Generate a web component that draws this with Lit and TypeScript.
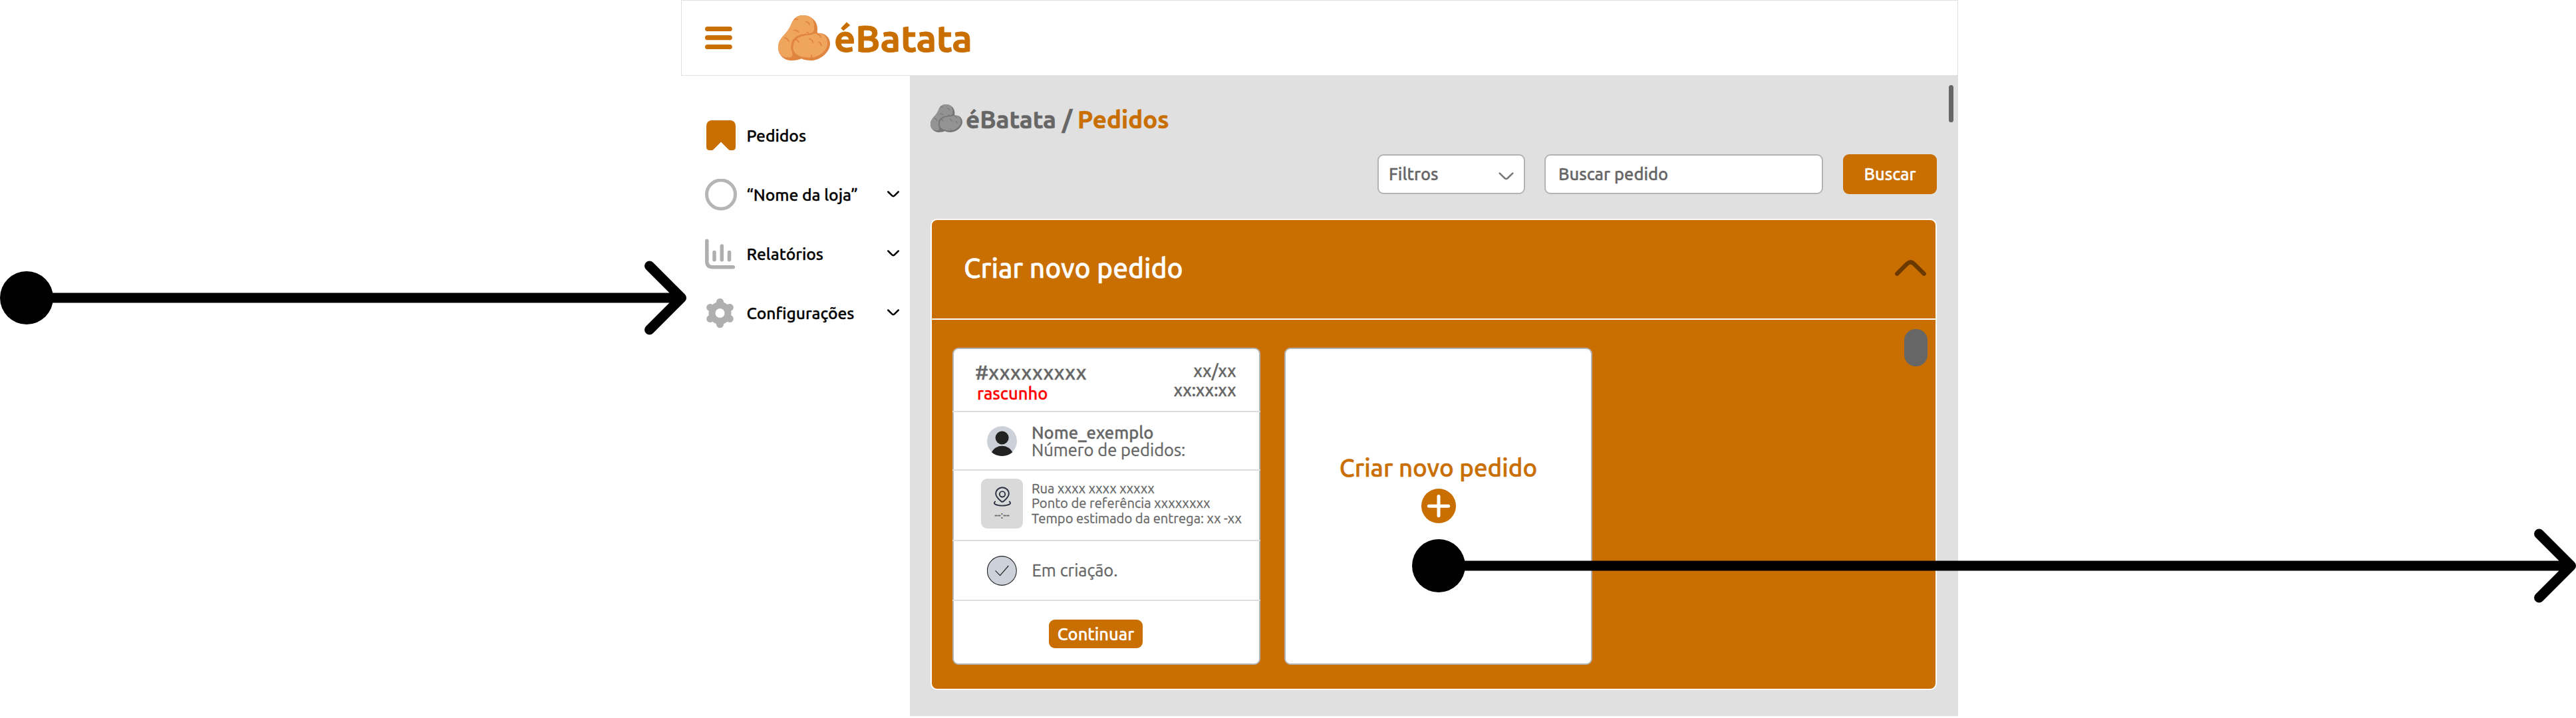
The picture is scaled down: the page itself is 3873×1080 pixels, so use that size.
import { LitElement, html, css, svg } from "lit";
import { customElement } from "lit/decorators.js";

/** Pair of potatoes used as the brand mark. */
@customElement("potato-mark")
class PotatoMark extends LitElement {
  static styles = css`
    :host { display: block; flex: none; }
    svg { display: block; width: 100%; height: 100%; }
    .light { fill: var(--potato-light); }
    .dark { fill: var(--potato-dark); }
    .spots { fill: none; stroke: var(--potato-dark); stroke-width: 5.5; stroke-linecap: round; }
  `;

  render() {
    return html`
      <svg viewBox="0 0 234 204" preserveAspectRatio="none">
        <path class="dark" d="M112 0C78 0 66 22 58 42C48 66 36 78 22 94C8 110 0 124 0 146C0 180 28 204 62 204C80 204 92 201 105 196C118 202 130 204 146 204C194 204 234 162 234 128C234 100 212 80 184 80L177 80C176 72 177 66 177 60C177 26 148 0 112 0Z"/>
        <path class="light" d="M112 0C78 0 66 22 58 42C48 66 36 78 22 94C8 110 0 124 0 144C0 168 10 180 22 186C38 192 54 192 62 186C70 178 58 164 58 142C58 106 84 88 116 84C134 82 162 84 162 62C162 42 162 22 146 8C136 2 126 0 112 0Z"/>
        <path class="light" d="M186 81C166 80 154 88 134 90C94 92 67 110 67 144C67 176 98 191 142 191C184 191 222 160 222 126C222 104 210 84 186 81Z"/>
        <g class="spots">
          <path d="M74 19Q80 15 88 19"/>
          <path d="M125 29Q138 31 141 42"/>
          <path d="M72 67Q84 66 92 76"/>
          <path d="M129 76Q134 77 137 81"/>
          <path d="M29 102Q42 104 48 117"/>
          <path d="M176 84Q189 87 192 99"/>
          <path d="M141 107Q154 110 157 123"/>
          <path d="M184 121Q193 125 195 136"/>
          <path d="M78 109Q90 112 93 122"/>
          <path d="M150 181Q153 186 150 192"/>
        </g>
      </svg>
    `;
  }
}

const icons = {
  orders: svg`<path fill="#c96e00" d="M11 1H37Q46 1 46 10V41Q46 46 41 46H37.5Q36.5 46 35.5 45L24 33.500L12.500 45Q11.500 46 10.500 46H7Q2 46 2 41V10Q2 1 11 1Z"/>`,
  store: svg`<circle cx="24" cy="23.500" r="21.500" fill="none" stroke="#b5b5b5" stroke-width="5"/>`,
  reports: svg`<g fill="none" stroke="#afafaf" stroke-linecap="round">
      <path stroke-width="5.500" d="M2.800 4.300V35Q2.800 43.800 11.500 43.800H42.300"/>
      <path stroke-width="5.500" d="M14 21.500V32.700M25.300 12V32.700M36.500 21.500V32.700"/>
    </g>`,
  settings: svg`<g fill="none" stroke="#afafaf">
      <circle cx="22.500" cy="24" r="12" stroke-width="10"/>
      <path stroke-width="11" stroke-linecap="round" d="M22.500 10V7.200M22.500 38V40.800M9.500 16.500L7.700 15.500M35.500 31.500L37.300 32.500M9.500 31.500L7.700 32.500M35.500 16.500L37.300 15.500"/>
    </g>`,
};

interface NavItem {
  label: string;
  icon: unknown;
  expandable: boolean;
}

const navItems: NavItem[] = [
  { label: "Pedidos", icon: icons.orders, expandable: false },
  { label: "“Nome da loja”", icon: icons.store, expandable: true },
  { label: "Relatórios", icon: icons.reports, expandable: true },
  { label: "Configurações", icon: icons.settings, expandable: true },
];

@customElement("app-root")
class AppRoot extends LitElement {
  static styles = css`
    :host {
      display: block;
      position: relative;
      width: 3873px;
      height: 1080px;
      overflow: hidden;
      background: #fff;
      color: #666;
      font-family: Ubuntu, "Noto Sans", "Open Sans", sans-serif;
      font-size: 25.500px;
      font-weight: 500;
      white-space: nowrap;
    }
    * { box-sizing: border-box; -webkit-text-stroke: 0.014em currentColor; }
    svg { display: block; flex: none; }
    .frame { width: 1920px; height: 1077px; margin-left: 1024px; }

    .topbar {
      display: flex; align-items: center;
      height: 114px; padding-left: 35px;
      border: 1px solid #e0e0e0; background: #fff;
    }
    .brand-mark {
      width: 78px; height: 68px; margin-left: 69px;
      --potato-light: #f0a55e; --potato-dark: #e08540;
    }
    .brand {
      margin-left: 6px; padding-top: 1px;
      color: #c96e00; font-size: 56.200px; line-height: 70px; font-weight: 700;
    }

    .body { display: flex; height: 963px; }
    .sidebar { width: 344px; padding-top: 45px; }
    .nav-item {
      display: flex; align-items: center;
      height: 89px; padding: 0 16px 0 36px;
      color: #000; font-size: 24.600px; line-height: 32px;
    }
    .nav-label { margin-left: 14.500px; margin-right: auto; }

    .content {
      position: relative;
      width: 1576px; height: 964px; margin-top: -1px; padding: 37px 32px 0 31px;
      background: #e0e0e0;
    }
    .page-thumb {
      position: absolute; top: 15px; right: 7px;
      width: 7px; height: 56px; border-radius: 4px; background: #666;
    }
    .crumbs {
      display: flex; align-items: center; height: 56px;
      font-size: 36.750px; font-weight: 700; line-height: 44px;
    }
    .crumb-mark {
      width: 48px; height: 42px;
      --potato-light: #939393; --potato-dark: #767676;
    }
    .crumb-root { margin-left: 5px; padding-top: 4px; }
    .crumb-page { margin-left: 8px; padding-top: 4px; color: #c96e00; }

    .toolbar {
      display: flex; justify-content: flex-end;
      height: 60px; margin-top: 26px; line-height: 32px;
    }
    .field {
      display: flex; align-items: center; justify-content: space-between;
      border: 2px solid #b3b3b3; border-radius: 9px; background: #fff;
    }
    .filter { width: 222px; padding: 0 15px 0 15px; }
    .filter-arrow { margin-top: 5px; }
    .search { width: 419px; margin-left: 29px; padding-left: 19px; }
    .search-button {
      display: flex; align-items: center; justify-content: center;
      width: 141px; margin-left: 30px; border-radius: 9px;
      background: #c96e00; color: #fff;
    }

    .panel {
      width: 1513px; height: 709px; margin-top: 37px;
      border: 2px solid #fff; border-radius: 10px; background: #c96e00;
    }
    .panel-head {
      display: flex; align-items: center; justify-content: space-between;
      height: 150px; padding: 0 14px 4px 48px;
      border-bottom: 2px solid #fff;
      color: #fff; font-size: 40.700px; line-height: 52px;
    }
    .panel-title { padding-bottom: 1px; }
    .panel-body { display: flex; align-items: flex-start; padding: 14px 12px 0 31px; }
    .card {
      width: 463px; height: 477px; margin: 28px 36px 0 0;
      border: 2px solid #b3b3b3; border-radius: 9px; background: #fff;
    }
    .panel-thumb {
      width: 35px; height: 56px; margin-left: auto;
      border-radius: 17px; background: #666;
    }

    .section {
      display: flex; align-items: center;
      margin: 0 -2px; border-bottom: 2px solid #dedede;
    }
    .order-head {
      height: 95px; align-items: flex-start; justify-content: space-between;
      padding: 0 36.500px 0 34px;
    }
    .order-id { padding-top: 14.500px; font-size: 30.200px; line-height: 40px; }
    .order-state { margin: -1px 0 0 3px; color: #f00; line-height: 26px; }
    .order-when { padding-top: 18px; font-size: 25.300px; line-height: 29px; text-align: right; }
    .client { height: 88px; padding: 1px 0 0 52px; line-height: 26px; }
    .client-text { margin-left: 22px; }
    .client-orders { font-weight: 400; }
    .address {
      height: 106px; padding: 0 0 5px 43px;
      font-size: 20.200px; line-height: 22.200px; font-weight: 400;
    }
    .address-text { margin-left: 13px; }
    .map-tile {
      display: flex; flex-direction: column; align-items: center;
      width: 63px; height: 75px; padding-top: 12px;
      border-radius: 9px; background: #d9d9d9;
    }
    .eta { margin-top: 3px; font-size: 15.300px; line-height: 20px; font-weight: 500; }
    .status { height: 90px; padding-left: 52px; line-height: 32px; font-weight: 400; }
    .status-text { margin-left: 22.500px; }
    .actions { height: 94px; border-bottom: 0; padding: 5px 0 0 145px; }
    .continue {
      display: flex; align-items: center; justify-content: center;
      width: 141px; height: 43px; border-radius: 9px;
      background: #c96e00; color: #fff; line-height: 32px;
    }

    .new-card {
      display: flex; flex-direction: column; align-items: center;
      padding-top: 158px; color: #c96e00; font-size: 36.700px; line-height: 42px;
    }
    .plus { margin-top: 10px; }

    .flow { position: absolute; inset: 0; pointer-events: none; }
  `;

  private renderNavItem(item: NavItem) {
    return html`
      <div class="nav-item">
        <svg width="48" height="48" viewBox="0 0 48 48">${item.icon}</svg>
        <span class="nav-label">${item.label}</span>
        ${item.expandable
          ? html`<svg width="18" height="11" viewBox="0 0 18 11">
              <path d="M1.300 1.500L7 7.200Q9 9.300 11 7.200L16.700 1.500" fill="none" stroke="#000" stroke-width="2.500" stroke-linecap="round"/>
            </svg>`
          : null}
      </div>
    `;
  }

  private renderOrderCard() {
    return html`
      <article class="card">
        <div class="section order-head">
          <div>
            <div class="order-id">#xxxxxxxxx</div>
            <div class="order-state">rascunho</div>
          </div>
          <div class="order-when">
            <div>xx/xx</div>
            <div>xx:xx:xx</div>
          </div>
        </div>
        <div class="section client">
          <svg width="45" height="45" viewBox="0 0 45 45">
            <circle cx="22.500" cy="22.500" r="22.500" fill="#ccd1d9"/>
            <circle cx="22.600" cy="17.500" r="10" fill="#222"/>
            <path d="M7 39.300C10 33 16 29.700 22.600 29.700S35.200 33 38.200 39.300C34 43 28.500 45 22.500 45S11 43 7 39.300Z" fill="#222"/>
          </svg>
          <div class="client-text">
            <div>Nome_exemplo</div>
            <div class="client-orders">Número de pedidos:</div>
          </div>
        </div>
        <div class="section address">
          <div class="map-tile">
            <svg width="28" height="30" viewBox="0 0 28 30">
              <g fill="none" stroke="#2b2f42" stroke-width="1.900" stroke-linecap="round">
                <path d="M14 22.800Q12.800 22.800 11.500 21.500C7 17.500 4.200 14.500 4.200 10.700A9.800 9.500 0 0 1 23.800 10.700C23.800 14.500 21 17.500 16.500 21.500Q15.200 22.800 14 22.800Z"/>
                <circle cx="14" cy="11.300" r="4.200"/>
                <path d="M3.200 22.500C-1 26 6 28.600 14 28.600S29 26 24.800 22.500"/>
              </g>
            </svg>
            <div class="eta">--:--</div>
          </div>
          <div class="address-text">
            <div>Rua xxxx xxxx xxxxx</div>
            <div>Ponto de referência xxxxxxxx</div>
            <div>Tempo estimado da entrega: xx -xx</div>
          </div>
        </div>
        <div class="section status">
          <svg width="45" height="45" viewBox="0 0 45 45">
            <circle cx="22.300" cy="22.500" r="21.900" fill="#cdd2da" stroke="#222" stroke-width="1.100"/>
            <path d="M12.500 22.300L19.600 29.700L32.300 15" fill="none" stroke="#222" stroke-width="1.200"/>
          </svg>
          <span class="status-text">Em criação.</span>
        </div>
        <div class="section actions">
          <div class="continue">Continuar</div>
        </div>
      </article>
    `;
  }

  private renderFlow() {
    return svg`
      <g fill="none" stroke="#000" stroke-width="15" stroke-linecap="round" stroke-linejoin="round">
        <path d="M40 448H1024.500M976.500 400L1024.500 448L976.500 496"/>
        <path d="M2163 851H3865.500M3817.500 803L3865.500 851L3817.500 899"/>
      </g>
      <circle cx="40" cy="448" r="40"/>
      <circle cx="2163" cy="851" r="40"/>
    `;
  }

  render() {
    return html`
      <div class="frame">
        <header class="topbar">
          <svg width="41" height="36" viewBox="0 0 41 36">
            <path d="M3.600 4.500H37.200M3.600 17.700H37.200M3.600 31.500H37.200" stroke="#c96e00" stroke-width="7.200" stroke-linecap="round"/>
          </svg>
          <potato-mark class="brand-mark"></potato-mark>
          <span class="brand">éBatata</span>
        </header>
        <div class="body">
          <nav class="sidebar">${navItems.map((item) => this.renderNavItem(item))}</nav>
          <main class="content">
            <div class="page-thumb"></div>
            <div class="crumbs">
              <potato-mark class="crumb-mark"></potato-mark>
              <span class="crumb-root">éBatata /</span>
              <span class="crumb-page">Pedidos</span>
            </div>
            <div class="toolbar">
              <div class="field filter">
                <span>Filtros</span>
                <svg class="filter-arrow" width="23" height="12" viewBox="0 0 23 12">
                  <path d="M1.700 1.600L9.300 9Q11.500 11 13.700 9L21.300 1.600" fill="none" stroke="#777" stroke-width="2.600" stroke-linecap="round"/>
                </svg>
              </div>
              <div class="field search"><span>Buscar pedido</span></div>
              <div class="search-button">Buscar</div>
            </div>
            <section class="panel">
              <div class="panel-head">
                <span class="panel-title">Criar novo pedido</span>
                <svg width="47" height="24" viewBox="0 0 47 24">
                  <path d="M3.300 20.800L18.300 5.800Q23.400 0.900 28.500 5.800L43.700 20.800" fill="none" stroke="#693900" stroke-width="6.300" stroke-linecap="round"/>
                </svg>
              </div>
              <div class="panel-body">
                ${this.renderOrderCard()}
                <article class="card new-card">
                  <span>Criar novo pedido</span>
                  <svg class="plus" width="52" height="52" viewBox="0 0 52 52">
                    <circle cx="26" cy="26" r="26" fill="#c96e00"/>
                    <path d="M26 11.600V40.800M11.300 26.200H40.700" stroke="#fff" stroke-width="5" stroke-linecap="round"/>
                  </svg>
                </article>
                <div class="panel-thumb"></div>
              </div>
            </section>
          </main>
        </div>
      </div>
      <svg class="flow" width="3873" height="1080" viewBox="0 0 3873 1080">${this.renderFlow()}</svg>
    `;
  }
}
